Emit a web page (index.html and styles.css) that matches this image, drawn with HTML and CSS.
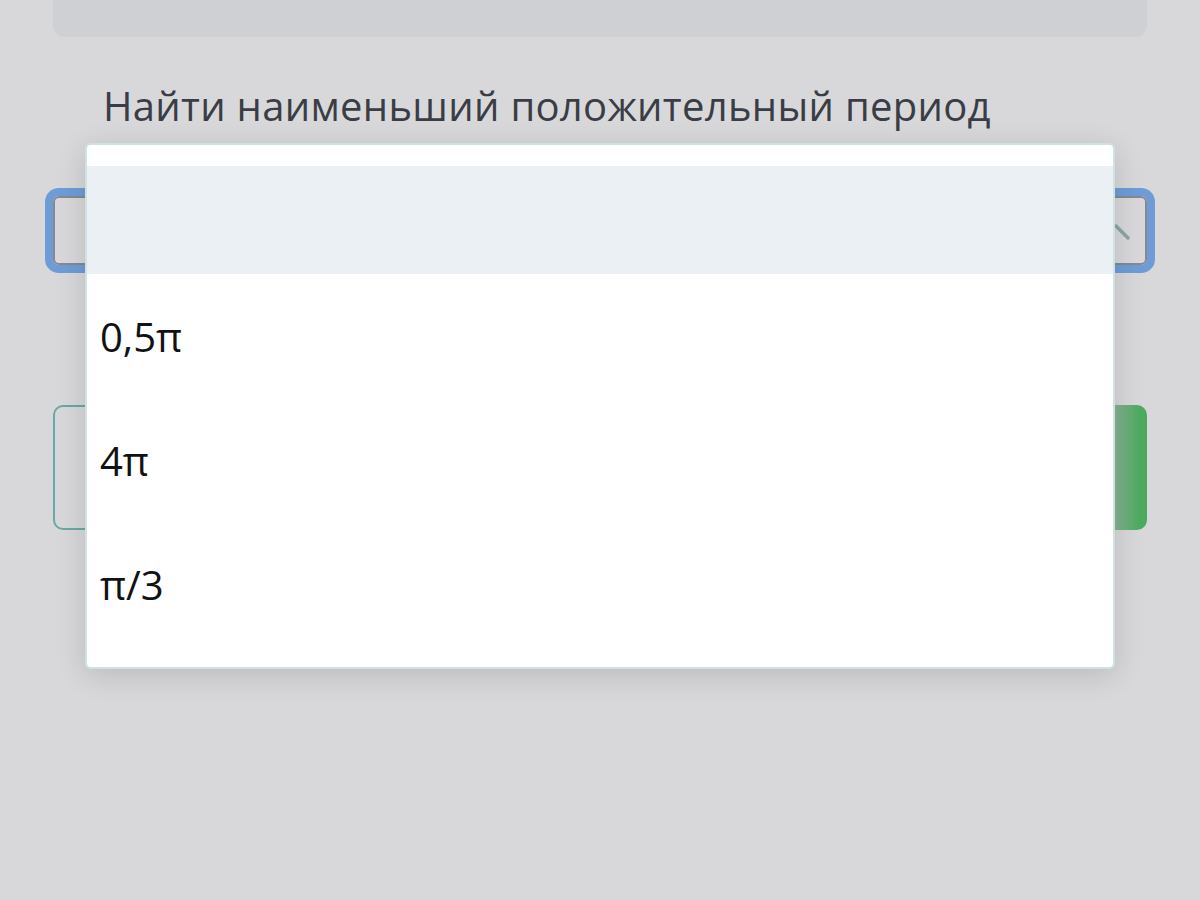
FILE: index.html
```html
<!DOCTYPE html>
<html lang="ru">
<head>
<meta charset="utf-8">
<title>Задание</title>
<link rel="stylesheet" href="styles.css">
</head>
<body>
<div class="page">
  <div class="card"></div>
  <h2 class="question">Найти наименьший положительный период</h2>
  <div class="select">
    <svg class="chevron" width="24" height="24" viewBox="0 0 24 24"><path d="M3 7 L15 19" stroke="#8aa6a5" stroke-width="3.5" stroke-linecap="round" fill="none"/></svg>
  </div>
  <div class="actions">
    <button class="btn btn-outline"></button>
    <button class="btn btn-green"></button>
  </div>
</div>
<ul class="dropdown">
  <li class="option option-empty"></li>
  <li class="option">0,5π</li>
  <li class="option">4π</li>
  <li class="option">π/3</li>
</ul>
</body>
</html>
```

FILE: styles.css
```css
html, body {
  margin: 0;
  padding: 0;
  background: #d8d8da;
  font-family: "Open Sans", "Noto Sans", sans-serif;
  height: 100%;
  overflow: hidden;
}

.page {
  padding: 0 53px;
  display: flex;
  flex-direction: column;
}

.card {
  height: 37px;
  background: #cfd0d3;
  border-radius: 0 0 12px 12px;
}

.question {
  margin: 42px 0 0 0;
  padding-left: 50px;
  font-size: 40px;
  font-weight: 400;
  line-height: 54px;
  color: #3a3d45;
  letter-spacing: 0.3px;
}

.select {
  margin-top: 63px;
  height: 65px;
  border: 2px solid #858a90;
  border-radius: 6px;
  box-shadow: 0 0 0 8px #6f9cd7;
  display: flex;
  align-items: center;
  justify-content: flex-end;
  padding-right: 8px;
}

.actions {
  margin-top: 140px;
  display: flex;
  gap: 24px;
}

.btn {
  flex: 1;
  height: 125px;
  border-radius: 10px;
  padding: 0;
}

.btn-outline {
  background: transparent;
  border: 2px solid #6aa8a5;
}

.btn-green {
  border: none;
  background: linear-gradient(to left, #4aa95d 0px, #4fab61 8px, #6aae7a 20px, #8db197 34px);
}

.dropdown {
  position: absolute;
  left: 85px;
  top: 143px;
  width: 1026px;
  height: 501px;
  margin: 0;
  padding: 21px 0 0 0;
  list-style: none;
  background: #ffffff;
  border: 2px solid #cfe2e3;
  border-radius: 6px;
  box-shadow: 0 6px 30px rgba(0, 0, 0, 0.14);
  box-sizing: content-box;
}

.option {
  height: 124px;
  display: flex;
  align-items: center;
  padding-left: 13px;
  font-family: "Open Sans", "Noto Sans", sans-serif;
  font-size: 40px;
  color: #111214;
}

.option-empty {
  height: 108px;
  background: #ebf0f4;
}
```
